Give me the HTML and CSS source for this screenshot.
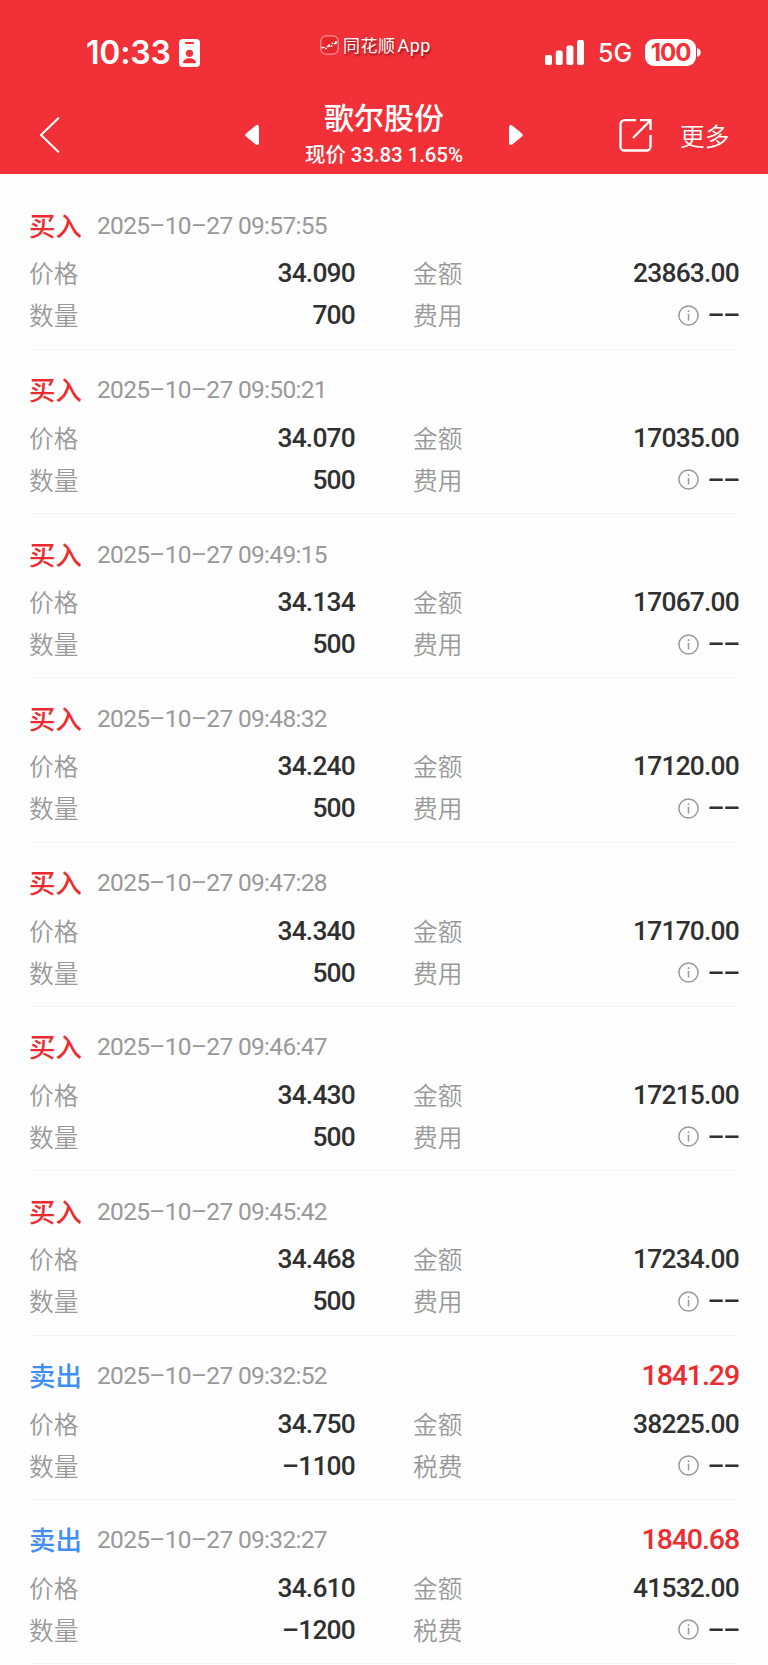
FILE: index.html
```html
<!DOCTYPE html>
<html lang="zh-CN">
<head>
    <meta charset="UTF-8">
    <meta name="viewport" content="width=device-width, initial-scale=1.0">
    <title>歌尔股份</title>
    <link rel="stylesheet" href="styles.css">
</head>
<body>
    <header>
        <div class="status-bar">
            <div class="status-left">
                <span class="time">10:33</span>
                <svg class="badge" width="21" height="28" viewBox="0 0 21 28">
                    <rect width="21" height="28" rx="4" fill="#fff"/>
                    <rect x="6" y="3" width="9" height="2" rx="1" fill="#f23037"/>
                    <circle cx="10.5" cy="14.3" r="3.6" fill="#f23037"/>
                    <path d="M4 24.2c0-3.4 3-5 6.500-5s6.500 1.600 6.500 5z" fill="#f23037"/>
                </svg>
            </div>
            <div class="app-label">
                <svg width="19" height="20" viewBox="0 0 19 20">
                    <rect x=".8" y=".8" width="17.400" height="18.400" rx="5.500" fill="#e6252d" stroke="#f78e92" stroke-width="1.300"/>
                    <path d="M1.500 12.500h3M5 13.500h2M7 11.500h1.500M9 9.500v2.500M10.500 11h2M12.500 9v-1.500M14 8.500h2M16 6v3" fill="none" stroke="#fff" stroke-width="1.700"/>
                </svg>
                <span>同花顺<span class="latin">App</span></span>
            </div>
            <div class="status-right">
                <svg width="39" height="25" viewBox="0 0 39 25" fill="#fff">
                    <rect x="0" y="15" width="7" height="10" rx="2"/>
                    <rect x="10.700" y="10.500" width="7" height="14.500" rx="2"/>
                    <rect x="21.400" y="5.500" width="7" height="19.500" rx="2"/>
                    <rect x="32" y="0" width="7" height="25" rx="2"/>
                </svg>
                <span class="network">5G</span>
                <span class="battery">100</span>
                <svg class="nub" width="4" height="9" viewBox="0 0 4 9"><path d="M0 0c5 1.500 5 7.500 0 9z" fill="#fff"/></svg>
            </div>
        </div>
        <nav>
            <svg class="back" width="20" height="36" viewBox="0 0 20 36" fill="none" stroke="#fff" stroke-width="2" stroke-linecap="round">
                <path d="M18.300 1.200L1 18l17.300 16.800"/>
            </svg>
            <svg class="prev" width="14" height="20" viewBox="0 0 14 20" fill="#fff" stroke="#fff" stroke-width="4" stroke-linejoin="round">
                <path d="M12 2v16L2.300 10z"/>
            </svg>
            <div class="title">
                <h1>歌尔股份</h1>
                <p>现价 33.83 1.65%</p>
            </div>
            <svg class="next" width="14" height="20" viewBox="0 0 14 20" fill="#fff" stroke="#fff" stroke-width="4" stroke-linejoin="round">
                <path d="M2 2v16l9.700-8z"/>
            </svg>
            <svg class="share" width="33" height="33" viewBox="0 0 33 33" fill="none" stroke="#fff" stroke-width="2.300">
                <path d="M17 1.200H5.500a4 4 0 0 0-4 4v22.300a4 4 0 0 0 4 4h22a4 4 0 0 0 4-4V16M21 1.200h10.500V11M31 1.700L14 19"/>
            </svg>
            <span class="more">更多</span>
        </nav>
    </header>

    <main id="liste"></main>

    <script>
        const trades = [
            { time: '09:57:55', price: '34.090', count: '700', amount: '23863.00' },
            { time: '09:50:21', price: '34.070', count: '500', amount: '17035.00' },
            { time: '09:49:15', price: '34.134', count: '500', amount: '17067.00' },
            { time: '09:48:32', price: '34.240', count: '500', amount: '17120.00' },
            { time: '09:47:28', price: '34.340', count: '500', amount: '17170.00' },
            { time: '09:46:47', price: '34.430', count: '500', amount: '17215.00' },
            { time: '09:45:42', price: '34.468', count: '500', amount: '17234.00' },
            { time: '09:32:52', price: '34.750', count: '–1100', amount: '38225.00', profit: '1841.29' },
            { time: '09:32:27', price: '34.610', count: '–1200', amount: '41532.00', profit: '1840.68' }
        ];

        const infoIcon = `<svg width="21" height="21" viewBox="0 0 21 21" fill="none" stroke="#999" stroke-width="1.500">
            <circle cx="10.500" cy="10.500" r="9.600"/><path d="M10.500 8.800v6.700M10.500 5.200v1.800"/></svg>`;

        document.getElementById('liste').innerHTML = trades.map(t => `
            <section class="trade">
                <div class="trade-head">
                    <span class="${t.profit ? 'sell' : 'buy'}">${t.profit ? '卖出' : '买入'}</span>
                    <span class="date">2025–10–27 ${t.time}</span>
                    ${t.profit ? `<span class="profit">${t.profit}</span>` : ''}
                </div>
                <div class="trade-grid">
                    <div class="cell"><span class="label">价格</span><span class="value">${t.price}</span></div>
                    <div class="cell"><span class="label">金额</span><span class="value">${t.amount}</span></div>
                    <div class="cell"><span class="label">数量</span><span class="value">${t.count}</span></div>
                    <div class="cell"><span class="label">${t.profit ? '税费' : '费用'}</span><span class="fee">${infoIcon}<span class="value">––</span></span></div>
                </div>
            </section>`).join('');
    </script>
</body>
</html>
```
FILE: styles.css
```css
* {
    box-sizing: border-box;
}

body {
    margin: 0;
    background: #fefefe;
    font-family: Roboto, 'Noto Sans CJK SC', sans-serif;
    overflow: hidden;
}

svg {
    display: block;
    flex: none;
}

header {
    height: 174.3px;
    background: #f23037;
    color: #fff;
}

.status-bar {
    display: grid;
    grid-template-columns: 320px 120px 1fr;
    height: 97px;
    padding-top: 32px;
}

.status-left, .status-right, .app-label {
    display: flex;
    align-items: center;
    height: 40px;
}

.time {
    width: 92px;
    margin-left: 86px;
    padding-top: 1px;
    font: 600 32px/40px Inter, sans-serif;
    letter-spacing: -0.2px;
}

.badge {
    margin-left: 1px;
    margin-top: 1px;
}

.app-label {
    gap: 4px;
    height: 25px;
    font-size: 17px;
    letter-spacing: 0.5px;
    text-shadow: 1px 2px 2px rgba(80, 0, 0, 0.6);
    white-space: nowrap;
}

.latin {
    margin-left: 2px;
    font-size: 18px;
}

.status-right {
    padding-left: 105px;
}

.network {
    width: 47px;
    margin-left: 14px;
    padding-top: 2px;
    font: 500 25px/40px Inter, sans-serif;
}

.battery {
    width: 51px;
    height: 27px;
    border-radius: 9px;
    background: #fff;
    color: #f23037;
    font: 700 24px/27px Inter, sans-serif;
    letter-spacing: -1px;
    text-align: center;
}

.nub {
    margin-left: 1px;
}

nav {
    display: flex;
    align-items: center;
    height: 76px;
    padding-left: 40px;
}

.prev {
    margin-left: 185px;
}

.title {
    width: 250px;
    padding-top: 2px;
    text-align: center;
}

.title h1 {
    margin: 0;
    font-size: 30px;
    font-weight: 500;
    line-height: 38px;
}

.title p {
    margin: 0;
    font-size: 20.5px;
    font-weight: 500;
    line-height: 34px;
    letter-spacing: -0.1px;
}

.share {
    margin-left: 96px;
}

.more {
    margin-left: 28px;
    font-size: 24.7px;
    font-weight: 350;
}

main {
    padding: 11.2px 29px 0;
}

.trade {
    height: 164.3px;
    padding-top: 24px;
    border-bottom: 1px solid #f4f4f4;
}

.trade-head {
    display: flex;
    align-items: center;
    height: 32px;
    margin-bottom: 11px;
}

.buy, .sell {
    width: 68px;
    padding-bottom: 2px;
    font-size: 26.4px;
    font-weight: 500;
    color: #ee2b2e;
}

.sell {
    color: #3f8ff5;
}

.date {
    font-size: 24.5px;
    letter-spacing: -0.68px;
    color: #999;
}

.profit {
    margin-left: auto;
    font-size: 28.5px;
    font-weight: 500;
    letter-spacing: -1.1px;
    color: #ee2b2e;
}

.trade-grid {
    display: grid;
    grid-template-columns: 326px 326px;
    column-gap: 58px;
    grid-auto-rows: 42px;
}

.cell {
    display: flex;
    align-items: center;
    justify-content: space-between;
}

.label {
    padding-bottom: 2px;
    font-size: 24.7px;
    font-weight: 350;
    color: #999;
}

.value {
    font-size: 26.4px;
    font-weight: 500;
    letter-spacing: -0.8px;
    color: #303030;
}

.fee {
    display: flex;
    align-items: center;
    gap: 9px;
}

.fee .value {
    letter-spacing: -1.2px;
}
```
